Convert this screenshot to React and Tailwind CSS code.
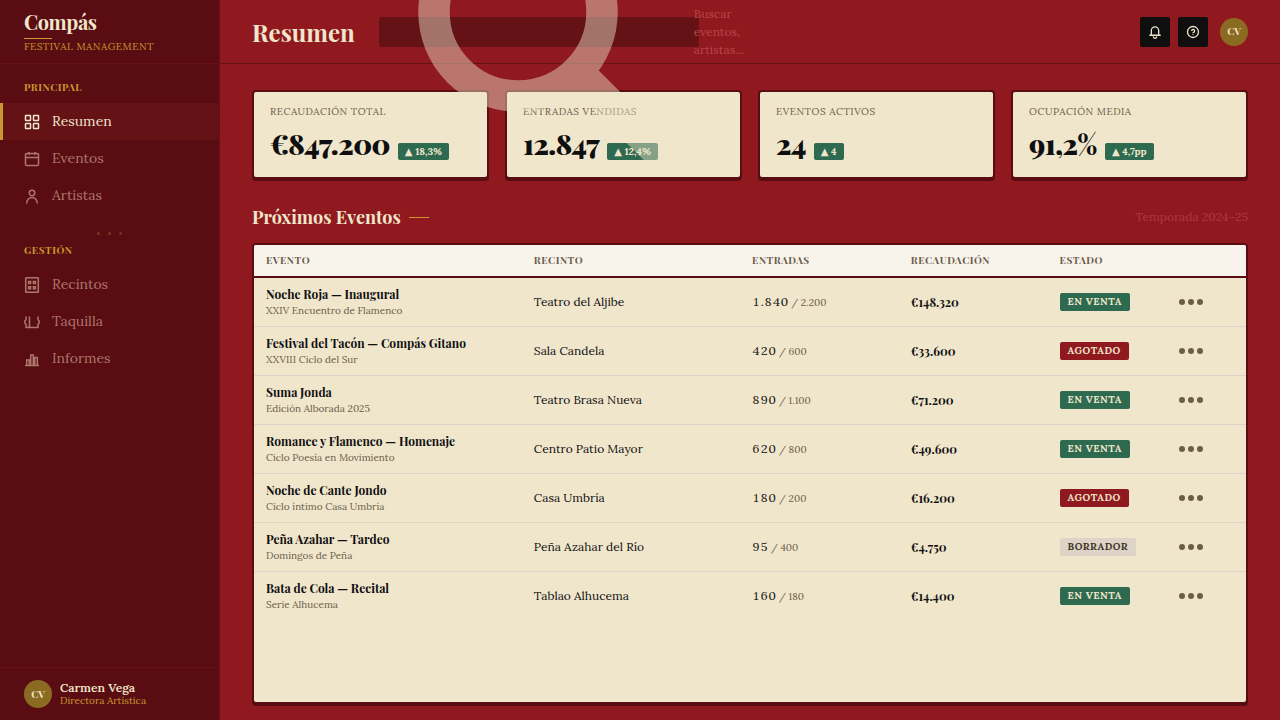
import React, { useState } from "react";

const navPrincipal = [
  { id: "resumen", label: "Resumen", icon: "grid" },
  { id: "eventos", label: "Eventos", icon: "calendar" },
  { id: "artistas", label: "Artistas", icon: "person" },
];

const navGestion = [
  { id: "recintos", label: "Recintos", icon: "building" },
  { id: "taquilla", label: "Taquilla", icon: "ticket" },
  { id: "informes", label: "Informes", icon: "chart" },
];

const stats = [
  { label: "Recaudación total", value: "€847.200", change: "18,3%" },
  { label: "Entradas vendidas", value: "12.847", change: "12,4%" },
  { label: "Eventos activos", value: "24", change: "4" },
  { label: "Ocupación media", value: "91,2%", change: "4,7pp" },
];

const events = [
  { name: "Noche Roja — Inaugural", series: "XXIV Encuentro de Flamenco", venue: "Teatro del Aljibe", sold: "1.840", total: "2.200", revenue: "€148.320", status: "En venta" },
  { name: "Festival del Tacón — Compás Gitano", series: "XXVIII Ciclo del Sur", venue: "Sala Candela", sold: "420", total: "600", revenue: "€33.600", status: "Agotado" },
  { name: "Suma Jonda", series: "Edición Alborada 2025", venue: "Teatro Brasa Nueva", sold: "890", total: "1.100", revenue: "€71.200", status: "En venta" },
  { name: "Romance y Flamenco — Homenaje", series: "Ciclo Poesía en Movimiento", venue: "Centro Patio Mayor", sold: "620", total: "800", revenue: "€49.600", status: "En venta" },
  { name: "Noche de Cante Jondo", series: "Ciclo íntimo Casa Umbría", venue: "Casa Umbría", sold: "180", total: "200", revenue: "€16.200", status: "Agotado" },
  { name: "Peña Azahar — Tardeo", series: "Domingos de Peña", venue: "Peña Azahar del Río", sold: "95", total: "400", revenue: "€4.750", status: "Borrador" },
  { name: "Bata de Cola — Recital", series: "Serie Alhucema", venue: "Tablao Alhucema", sold: "160", total: "180", revenue: "€14.400", status: "En venta" },
];

const statusStyles = {
  "En venta": "bg-[#2d6a4f] text-[#f0e6cc]",
  Agotado: "bg-[#8f191f] text-[#f0e6cc]",
  Borrador: "bg-[#ddd3c6] text-[#3f352b]",
};

const icons = {
  grid: (
    <>
      <rect x="1.5" y="1.5" width="5" height="5" rx="0.5" />
      <rect x="9.5" y="1.5" width="5" height="5" rx="0.5" />
      <rect x="1.5" y="9.5" width="5" height="5" rx="0.5" />
      <rect x="9.5" y="9.5" width="5" height="5" rx="0.5" />
    </>
  ),
  calendar: (
    <>
      <rect x="1.5" y="2.5" width="13" height="12" rx="1" />
      <path d="M1.5 6.5h13M5 1v3M11 1v3" />
    </>
  ),
  person: (
    <>
      <circle cx="8" cy="5" r="2.7" />
      <path d="M2.8 15.5v-.8a5.2 5.2 0 0 1 10.4 0v.8" />
    </>
  ),
  building: (
    <>
      <rect x="1.7" y="0.8" width="12.6" height="14.4" rx="0.5" />
      <path d="M4.6 4.4h2v2h-2zM9.4 4.4h2v2h-2zM4.6 9.8h2v2h-2zM9.4 9.8h2v2h-2z" />
    </>
  ),
  ticket: (
    <path d="M2 2.5v3.3L.8 7v2L2 10.2v3.3h12v-3.3L15.2 9V7L14 5.8V2.5M5.5 2.5v11" />
  ),
  chart: (
    <path d="M1 14.5h14M2.7 14.5V9h2.6v5.5M6.7 14.5V4h2.6v10.5M10.7 14.5V6.5h2.6v8" />
  ),
  bell: (
    <path d="M1.5 11.7h13M3.8 11.7V6.3a4.2 4.2 0 0 1 8.400 0v5.400M6 13.200a2 2 0 0 0 4 0" />
  ),
  help: (
    <>
      <circle cx="8" cy="8" r="6.3" />
      <path d="M6.4 6.800a1.700 1.700 0 1 1 2.300 1.600c-.5.200-.7.400-.7.700M8 10.100v1" />
    </>
  ),
};

const Icon = ({ name, className }) => (
  <svg viewBox="0 0 16 16" fill="none" stroke="currentColor" strokeWidth="1.5" className={className} aria-hidden="true">
    {icons[name]}
  </svg>
);

const Avatar = () => (
  <span className="flex size-7 shrink-0 items-center justify-center rounded-full bg-[#8b6a22] font-['Playfair_Display','Liberation_Serif',serif] text-[10px] font-bold text-[#f0e6cc]">
    CV
  </span>
);

const NavGroup = ({ title, items, active, onSelect }) => (
  <div>
    <h2 className="px-6 pb-2 font-['Playfair_Display','Liberation_Serif',serif] text-[10px] leading-4 font-bold tracking-wider text-[#c9982f] uppercase">
      {title}
    </h2>
    {items.map((item) => (
      <button
        key={item.id}
        onClick={() => onSelect(item.id)}
        className={
          item.id === active
            ? "flex h-[37px] w-full items-center gap-3 border-l-3 border-[#c9982f] bg-[#641216] pr-6 pl-[21px] text-sm text-[#f0e6cc]"
            : "flex h-[37px] w-full items-center gap-3 border-l-3 border-transparent pr-6 pl-[21px] text-sm text-[#ad776d]"
        }
      >
        <Icon name={item.icon} className="size-4" />
        <span className="pb-px">{item.label}</span>
      </button>
    ))}
  </div>
);

const StatCard = ({ label, value, change }) => (
  <div className="rounded-sm border-2 border-[#590d12] bg-[#f0e6cc] px-4 pt-3 pb-4 shadow-[0_2px_0_#590d12]">
    <p className="text-[10px] leading-[15px] tracking-wider text-[#6b5d4a] uppercase">{label}</p>
    <p className="mt-2 flex items-baseline gap-2">
      <span className="font-['Playfair_Display','Liberation_Serif',serif] text-[28px] leading-[34px] font-black tracking-[-0.02em] text-[#0f0f0f]">
        {value}
      </span>
      <span className="rounded-xs bg-[#2d6a4f] px-[7px] text-[10px] leading-[17px] font-bold whitespace-nowrap text-[#f0e6cc]">
        <span className="font-['DejaVu_Sans',sans-serif] leading-none">▲</span> {change}
      </span>
    </p>
  </div>
);

const App = () => {
  const [active, setActive] = useState("resumen");
  const [query, setQuery] = useState("");

  return (
    <div className="flex min-h-screen bg-[#8f191f] font-['Lora','Liberation_Serif',serif] text-[#0f0f0f]">
      {/* Sidebar */}
      <aside className="flex w-[220px] shrink-0 flex-col border-r border-[#641216] bg-[#590d12]">
        <div className="h-16 border-b border-[#641216] px-6 pt-2">
          <p className="mb-0.5 font-['Playfair_Display','Liberation_Serif',serif] text-xl leading-7 font-bold tracking-[-0.02em] text-[#f0e6cc]">
            Compás
          </p>
          <div className="h-px w-7 bg-[#c9982f]" />
          <p className="text-[10px] leading-[15px] tracking-wider text-[#c9982f] uppercase">Festival Management</p>
        </div>
        <nav className="flex-1 pt-[15px]">
          <NavGroup title="Principal" items={navPrincipal} active={active} onSelect={setActive} />
          <div className="flex h-7 items-end justify-center gap-2 pb-[7px]">
            <span className="size-[3px] rounded-full bg-[#7b3420]" />
            <span className="size-[3px] rounded-full bg-[#7b3420]" />
            <span className="size-[3px] rounded-full bg-[#7b3420]" />
          </div>
          <NavGroup title="Gestión" items={navGestion} active={active} onSelect={setActive} />
        </nav>
        <div className="flex items-center gap-2 border-t border-[#641216] px-6 py-3">
          <Avatar />
          <div>
            <p className="text-xs leading-[14px] font-semibold text-[#f0e6cc]">Carmen Vega</p>
            <p className="text-[10px] leading-3 text-[#c9982f]">Directora Artística</p>
          </div>
        </div>
      </aside>

      <div className="flex min-w-0 flex-1 flex-col">
        {/* Header */}
        <header className="flex h-16 items-center border-b border-[#641216] px-8">
          <h1 className="mr-6 font-['Playfair_Display','Liberation_Serif',serif] text-2xl font-bold text-[#f0e6cc]">Resumen</h1>
          <div className="relative flex items-center">
            <input
              id="search"
              type="text"
              value={query}
              onChange={(e) => setQuery(e.target.value)}
              className="h-[30px] w-80 rounded-xs bg-[#641216] px-3 text-xs text-[#f0e6cc] outline-none"
            />
            <label htmlFor="search" className="relative -ml-[5px] w-14 text-xs leading-[18px] text-[#b8484a]">
              Buscar eventos, artistas...
            </label>
            <svg
              viewBox="0 0 16 16"
              fill="none"
              stroke="#f0e6cc"
              strokeWidth="1.5"
              className="pointer-events-none absolute -top-[140px] -left-2 z-10 size-[336px] opacity-45"
              aria-hidden="true"
            >
              <circle cx="7" cy="7" r="4" />
              <path d="M9.8 9.8L14 14" />
            </svg>
          </div>
          <div className="ml-auto flex items-center gap-2">
            <button aria-label="Notificaciones" className="flex size-[30px] items-center justify-center rounded-xs bg-[#0f0f0f] text-[#f0e6cc]">
              <Icon name="bell" className="size-[14px]" />
            </button>
            <button aria-label="Ayuda" className="mr-1 flex size-[30px] items-center justify-center rounded-xs bg-[#0f0f0f] text-[#f0e6cc]">
              <Icon name="help" className="size-[14px]" />
            </button>
            <Avatar />
          </div>
        </header>

        <main className="flex flex-1 flex-col px-8 pt-[26px] pb-4">
          <section className="grid grid-cols-4 gap-4">
            {stats.map((s) => (
              <StatCard key={s.label} {...s} />
            ))}
          </section>

          <div className="mt-6 mb-3 flex items-center justify-between">
            <h2 className="flex items-center gap-2 font-['Playfair_Display','Liberation_Serif',serif] text-lg font-bold text-[#f0e6cc]">
              Próximos Eventos
              <span className="h-px w-5 bg-[#c9982f]" />
            </h2>
            <span className="text-xs text-[#ac3b3f]">Temporada 2024–25</span>
          </div>

          {/* Events table */}
          <section className="flex-1 overflow-hidden rounded-sm border-2 border-[#590d12] bg-[#f0e6cc] shadow-[0_2px_0_#590d12]">
            <table className="w-full table-fixed border-collapse text-left">
              <colgroup>
                <col className="w-[27%]" />
                <col className="w-[22%]" />
                <col className="w-[16%]" />
                <col className="w-[15%]" />
                <col className="w-[12%]" />
                <col className="w-[8%]" />
              </colgroup>
              <thead>
                <tr className="h-8 border-b-2 border-[#590d12] bg-[#f8f4ec] font-['Playfair_Display','Liberation_Serif',serif] text-[10px] tracking-wider text-[#6b5d4a] uppercase">
                  <th className="px-3">Evento</th>
                  <th className="px-3">Recinto</th>
                  <th className="px-3">Entradas</th>
                  <th className="px-3">Recaudación</th>
                  <th className="px-3">Estado</th>
                  <th aria-label="Acciones" />
                </tr>
              </thead>
              <tbody>
                {events.map((ev) => (
                  <tr key={ev.name} className="h-[49px] border-b border-[#ddd3c6] text-xs last:border-b-0">
                    <td className="px-3">
                      <p className="font-['Playfair_Display','Liberation_Serif',serif] leading-[18px] font-bold">{ev.name}</p>
                      <p className="text-[10px] leading-4 text-[#6b5d4a]">{ev.series}</p>
                    </td>
                    <td className="px-3">{ev.venue}</td>
                    <td className="px-3">
                      <span className="tracking-wide tabular-nums">{ev.sold}</span>
                      <span className="text-[10px] text-[#6b5d4a]"> / {ev.total}</span>
                    </td>
                    <td className="px-3 font-['Playfair_Display','Liberation_Serif',serif] font-bold">{ev.revenue}</td>
                    <td className="px-3">
                      <span className={`inline-block rounded-xs px-2 align-middle text-[10px] leading-[18px] font-bold tracking-wider uppercase ${statusStyles[ev.status]}`}>
                        {ev.status}
                      </span>
                    </td>
                    <td className="px-3">
                      <button aria-label={`Acciones de ${ev.name}`} className="flex gap-[3px] text-[#6b5d4a]">
                        <span className="size-[6px] rounded-full bg-current" />
                        <span className="size-[6px] rounded-full bg-current" />
                        <span className="size-[6px] rounded-full bg-current" />
                      </button>
                    </td>
                  </tr>
                ))}
              </tbody>
            </table>
          </section>
        </main>
      </div>
    </div>
  );
};

export default App;
